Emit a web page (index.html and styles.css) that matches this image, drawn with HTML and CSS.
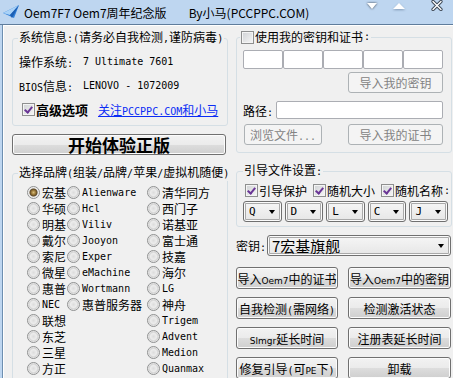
FILE: index.html
```html
<!doctype html>
<html lang="zh-CN">
<head>
    <meta charset="utf-8">
    <title>Oem7F7 Oem7周年纪念版</title>
    <link rel="stylesheet" href="styles.css">
</head>
<body>
<div class="ventana">
    <div class="titulo">
        <svg class="logo" width="17" height="14" viewBox="0 0 17 14">
            <polygon points="0,8 16,0 11,13" fill="#2f7fd8"/>
            <polygon points="0,8 16,0 7,10" fill="#a9d2f7"/>
            <polygon points="7,10 16,0 9,13" fill="#1c5fb4"/>
        </svg>
        <span class="nombre">Oem7F7 Oem7周年纪念版</span>
        <span class="autor">By小马(PCCPPC.COM)</span>
        <span class="ctl bajar"></span>
        <span class="ctl subir"></span>
        <svg class="ctl cerrar" width="12" height="11" viewBox="0 0 12 11">
            <path d="M2 1.5 10 9.5M10 1.5 2 9.5" stroke="#3b4654" stroke-width="3.2" stroke-linecap="round"/>
            <path d="M2 1.5 10 9.5M10 1.5 2 9.5" stroke="#ffffff" stroke-width="1.4" stroke-linecap="round"/>
        </svg>
    </div>

    <div class="cliente">
        <div class="columna">
            <fieldset class="grupo info">
                <legend>系统信息<span class="m">:(</span>请务必自我检测<span class="m">,</span>谨防病毒<span class="m">)</span></legend>
                <div class="fila"><span class="etiqueta">操作系统<span class="m">:</span></span><span class="m">7 Ultimate 7601</span></div>
                <div class="fila"><span class="etiqueta"><span class="m">BIOS</span>信息<span class="m">:</span></span><span class="m">LENOVO - 1072009</span></div>
                <div class="fila">
                    <span class="chk on"></span>
                    <b class="avanzado">高级选项</b>
                    <a class="enlace" href="#">关注<span class="m">PCCPPC.COM</span>和小马</a>
                </div>
            </fieldset>

            <button class="boton grande">开始体验正版</button>

            <fieldset class="grupo marcas">
                <legend>选择品牌<span class="m">(</span>组装<span class="m">/</span>品牌<span class="m">/</span>苹果<span class="m">/</span>虚拟机随便<span class="m">)</span></legend>
                <div class="radios">
                    <label class="op"><span class="rad on"></span>宏基</label>
                    <label class="op"><span class="rad"></span><span class="m">Alienware</span></label>
                    <label class="op"><span class="rad"></span>清华同方</label>

                    <label class="op"><span class="rad"></span>华硕</label>
                    <label class="op"><span class="rad"></span><span class="m">Hcl</span></label>
                    <label class="op"><span class="rad"></span>西门子</label>

                    <label class="op"><span class="rad"></span>明基</label>
                    <label class="op"><span class="rad"></span><span class="m">Viliv</span></label>
                    <label class="op"><span class="rad"></span>诺基亚</label>

                    <label class="op"><span class="rad"></span>戴尔</label>
                    <label class="op"><span class="rad"></span><span class="m">Jooyon</span></label>
                    <label class="op"><span class="rad"></span>富士通</label>

                    <label class="op"><span class="rad"></span>索尼</label>
                    <label class="op"><span class="rad"></span><span class="m">Exper</span></label>
                    <label class="op"><span class="rad"></span>技嘉</label>

                    <label class="op"><span class="rad"></span>微星</label>
                    <label class="op"><span class="rad"></span><span class="m">eMachine</span></label>
                    <label class="op"><span class="rad"></span>海尔</label>

                    <label class="op"><span class="rad"></span>惠普</label>
                    <label class="op"><span class="rad"></span><span class="m">Wortmann</span></label>
                    <label class="op"><span class="rad"></span><span class="m">LG</span></label>

                    <label class="op"><span class="rad"></span><span class="m">NEC</span></label>
                    <label class="op"><span class="rad"></span>惠普服务器</label>
                    <label class="op"><span class="rad"></span>神舟</label>

                    <label class="op"><span class="rad"></span>联想</label>
                    <span></span>
                    <label class="op"><span class="rad"></span><span class="m">Trigem</span></label>

                    <label class="op"><span class="rad"></span>东芝</label>
                    <span></span>
                    <label class="op"><span class="rad"></span><span class="m">Advent</span></label>

                    <label class="op"><span class="rad"></span>三星</label>
                    <span></span>
                    <label class="op"><span class="rad"></span><span class="m">Medion</span></label>

                    <label class="op"><span class="rad"></span>方正</label>
                    <span></span>
                    <label class="op"><span class="rad"></span><span class="m">Quanmax</span></label>
                </div>
            </fieldset>
        </div>

        <div class="columna">
            <fieldset class="grupo clave">
                <legend class="con-chk"><span class="chk"></span>使用我的密钥和证书<span class="m">:</span></legend>
                <div class="cajas">
                    <input class="txt" type="text">
                    <input class="txt" type="text">
                    <input class="txt" type="text">
                    <input class="txt" type="text">
                    <input class="txt" type="text">
                </div>
                <div class="derecha">
                    <button class="boton medio" disabled>导入我的密钥</button>
                </div>
                <div class="ruta">
                    <span>路径<span class="m">:</span></span>
                    <input class="txt largo" type="text">
                </div>
                <div class="par">
                    <button class="boton examinar" disabled>浏览文件<span class="m">...</span></button>
                    <button class="boton medio" disabled>导入我的证书</button>
                </div>
            </fieldset>

            <fieldset class="grupo arranque">
                <legend>引导文件设置<span class="m">:</span></legend>
                <div class="opciones">
                    <label class="op"><span class="chk on"></span>引导保护</label>
                    <label class="op"><span class="chk on"></span>随机大小</label>
                    <label class="op"><span class="chk on"></span>随机名称<span class="m">:</span></label>
                </div>
                <div class="letras">
                    <div class="sel">Q</div>
                    <div class="sel">D</div>
                    <div class="sel">L</div>
                    <div class="sel">C</div>
                    <div class="sel">J</div>
                </div>
            </fieldset>

            <div class="fila-clave">
                <span>密钥<span class="m">:</span></span>
                <div class="sel ancho">7宏基旗舰</div>
            </div>

            <div class="botones">
                <button class="boton">导入<span class="p">Oem7</span>中的证书</button>
                <button class="boton">导入<span class="p">Oem7</span>中的密钥</button>
                <button class="boton">自我检测<span class="m">(</span>需网络<span class="m">)</span></button>
                <button class="boton">检测激活状态</button>
                <button class="boton"><span class="p">Slmgr</span>延长时间</button>
                <button class="boton">注册表延长时间</button>
                <button class="boton">修复引导<span class="m">(</span>可<span class="p">PE</span>下<span class="m">)</span></button>
                <button class="boton">卸载</button>
            </div>
        </div>
    </div>
</div>
</body>
</html>
```

FILE: styles.css
```css
body{
    margin: 0;
    font: 12px "Noto Sans CJK SC", sans-serif;
    color: #000;
}
.ventana{
    width: 453px;
    height: 378px;
    overflow: hidden;
    background: #bed6f0;
}
.titulo{
    display: flex;
    align-items: center;
    height: 24px;
    padding-left: 3px;
    border-bottom: 1px solid #5f7d9c;
    white-space: nowrap;
}
.logo{
    flex: none;
    margin-right: 4px;
}
.autor{
    margin-left: 22px;
}
.ctl{
    display: block;
    flex: none;
    align-self: flex-start;
}
.bajar{
    width: 0;
    height: 0;
    margin: 3px 0 0 auto;
    border-left: 5px solid transparent;
    border-right: 5px solid transparent;
    border-top: 6px solid #fff;
    filter: drop-shadow(0 0 1px #2c3642);
}
.subir{
    width: 0;
    height: 0;
    margin: 3px 0 0 16px;
    border-left: 6px solid transparent;
    border-right: 6px solid transparent;
    border-bottom: 6px solid #fff;
    filter: drop-shadow(0 1px 1px #7f98b4);
}
.cerrar{
    margin: 0 10px 0 26px;
}
.cliente{
    display: flex;
    gap: 8px;
    height: 353px;
    margin-left: 2px;
    padding-left: 9px;
    border-left: 1px solid #6e8fb0;
    background: #f0f0f0;
    box-shadow: inset 1px 1px #fff;
}
.columna{
    width: 216px;
    flex: none;
}
.m{
    font-family: "DejaVu Sans Mono", monospace;
    font-size: 10px;
}
.p{
    font-family: "DejaVu Sans", sans-serif;
    font-size: 9px;
}

/* group boxes */
.grupo{
    margin: 0;
    padding: 0 5px;
    border: 1px solid #d5dfe5;
    border-radius: 3px;
    min-width: 0;
}
.grupo legend{
    padding: 0 1px;
    line-height: 14px;
    white-space: nowrap;
}
.info{
    margin-top: 5px;
    padding-top: 3px;
    padding-bottom: 4px;
}
.fila{
    display: flex;
    align-items: center;
    height: 24px;
    padding-left: 1px;
    white-space: nowrap;
}
.etiqueta{
    width: 64px;
}
.fila .chk{
    margin-left: 3px;
}
.avanzado{
    font-size: 13px;
    margin-left: 1px;
}
.enlace{
    margin-left: 10px;
    color: #0a2cf5;
}

.boton{
    box-sizing: border-box;
    height: 22px;
    margin: 0;
    padding: 0;
    border: 1px solid #707070;
    border-radius: 3px;
    background: linear-gradient(#f2f2f2 0, #ebebeb 50%, #dddddd 50%, #cfcfcf 100%);
    box-shadow: inset 0 0 0 1px #fcfcfc;
    font: inherit;
    color: #000;
    white-space: nowrap;
}
.boton:disabled{
    border-color: #adb2b5;
    background: #f4f4f4;
    box-shadow: none;
    color: #838383;
}
.grande{
    display: block;
    width: 214px;
    height: 21px;
    margin-top: 8px;
    font-size: 17px;
    font-weight: bold;
    line-height: 1;
}

.marcas{
    margin-top: 10px;
    padding-top: 3px;
    padding-bottom: 4px;
}
.radios{
    display: grid;
    grid-template-columns: 40px 80px auto;
    grid-auto-rows: 16px;
    padding-left: 9px;
}
.op{
    display: flex;
    align-items: center;
    gap: 2px;
    white-space: nowrap;
}
.rad{
    flex: none;
    box-sizing: border-box;
    width: 13px;
    height: 13px;
    border: 1px solid #8f9091;
    border-radius: 50%;
    background: radial-gradient(circle, #dcdcdc 0, #ececec 3px, #d3d3d3 4.5px, #fbfbfb 6px);
}
.rad.on{
    background: radial-gradient(circle, #d9bd79 0, #8c6b2f 2.5px, #5c4827 3.5px, #e4e4e4 4.5px, #fff 6px);
}
.chk{
    flex: none;
    display: inline-flex;
    justify-content: center;
    box-sizing: border-box;
    width: 13px;
    height: 13px;
    border: 1px solid #8e8f8f;
    background: linear-gradient(135deg, #cfd1d4, #f7f7f7);
    box-shadow: inset 0 0 0 1px #f4f4f4;
}
.chk.on::after{
    content: "";
    width: 3px;
    height: 6px;
    margin-top: 1px;
    border: solid #6a3596;
    border-width: 0 2px 2px 0;
    transform: rotate(40deg);
}

/* right side */
.clave{
    margin-top: 5px;
    padding: 0 8px 7px 6px;
}
.con-chk{
    display: flex;
    align-items: center;
    gap: 1px;
    margin-left: -3px;
}
.cajas{
    display: flex;
    margin-top: 6px;
}
.txt{
    box-sizing: border-box;
    width: 40px;
    height: 19px;
    margin: 0;
    border: 1px solid #abadb3;
    border-radius: 2px;
    background: #fff;
}
.derecha{
    display: flex;
    justify-content: flex-end;
    margin-top: 3px;
}
.medio{
    width: 95px;
    height: 21px;
}
.ruta{
    display: flex;
    align-items: center;
    margin-top: 8px;
}
.ruta > span{
    width: 33px;
}
.largo{
    flex: 1;
    height: 18px;
}
.par{
    display: flex;
    justify-content: space-between;
    margin-top: 5px;
}
.examinar{
    width: 78px;
    height: 21px;
    margin-left: 1px;
}

.arranque{
    margin-top: 10px;
    padding: 3px 3px 4px 6px;
}
.opciones{
    display: flex;
    gap: 6px;
    height: 16px;
    padding-left: 2px;
}
.opciones .op{
    gap: 1px;
}
.letras{
    display: flex;
    gap: 3px;
    margin-top: 3px;
}
.sel{
    display: flex;
    align-items: center;
    justify-content: space-between;
    box-sizing: border-box;
    flex: 1;
    height: 21px;
    padding: 0 6px 0 5px;
    border: 1px solid #707070;
    border-radius: 3px;
    background: linear-gradient(#f6f6f6, #e6e6e6);
    box-shadow: inset 0 0 0 1px #fbfbfb, inset 0 0 0 2px #a9a9a9;
    font-family: "DejaVu Sans Mono", monospace;
    font-size: 11px;
}
.sel::after{
    content: "";
    border-left: 3.5px solid transparent;
    border-right: 3.5px solid transparent;
    border-top: 4px solid #000;
}
.fila-clave{
    display: flex;
    align-items: center;
    margin-top: 8px;
}
.fila-clave > span{
    width: 31px;
}
.ancho{
    height: 21px;
    margin-right: 1px;
    padding-left: 4px;
    font-family: "Noto Sans CJK SC", sans-serif;
    font-size: 15px;
}
.botones{
    display: grid;
    grid-template-columns: 102px 103px;
    grid-auto-rows: 22px;
    gap: 8px 10px;
    margin-top: 11px;
}
```
